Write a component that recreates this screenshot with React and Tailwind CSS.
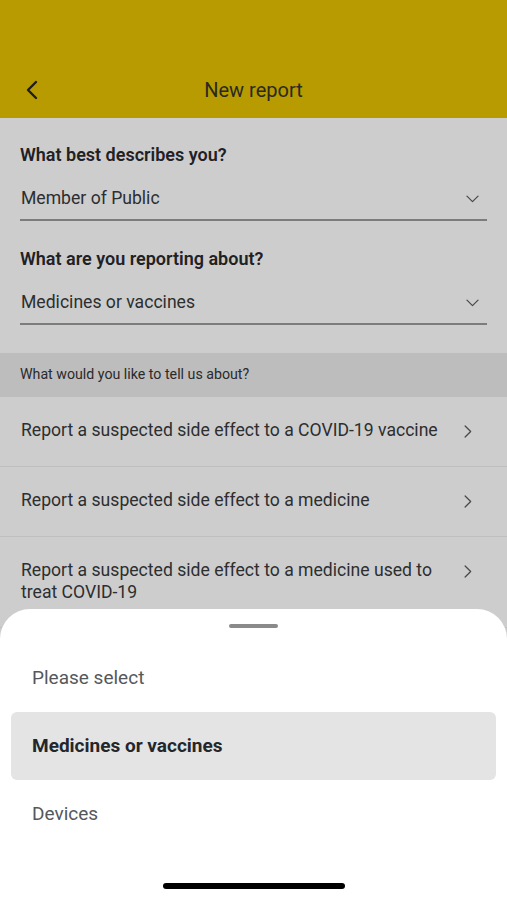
import React from "react";

const Chevron = ({ dir = "down", className = "" }) => (
  <svg
    className={className}
    fill="none"
    stroke="currentColor"
    strokeWidth="1.6"
    strokeLinecap="round"
    strokeLinejoin="round"
    viewBox="0 0 24 24"
  >
    {dir === "down" && <path d="M5 9l7 7 7-7" />}
    {dir === "right" && <path d="M9 5l7 7-7 7" />}
    {dir === "left" && <path d="M15 4l-8 8 8 8" />}
  </svg>
);

const SelectField = ({ label, value }) => (
  <div>
    <div className="text-[18px] leading-6 font-semibold text-[#1f2124]">{label}</div>
    <div className="mt-[19px] flex items-center justify-between pl-px pb-[9px] border-b-2 border-[#7c7c7c]">
      <span className="text-[17.6px] leading-6 text-[#2c2e30]">{value}</span>
      <Chevron className="w-[19px] h-[19px] mr-[5px] text-[#4a4a4a]" />
    </div>
  </div>
);

const options = [
  "Report a suspected side effect to a COVID-19 vaccine",
  "Report a suspected side effect to a medicine",
  "Report a suspected side effect to a medicine used to treat COVID-19",
];

const App = () => {
  return (
    <div
      className="relative w-full h-[900px] overflow-hidden bg-[#cdcdcd]"
      style={{ fontFamily: "Roboto, 'Liberation Sans', sans-serif" }}
    >
      {/* Header */}
      <header className="h-[118px] bg-[#b89b00] flex items-end pb-[16px] px-5">
        <div className="relative w-full h-6 flex items-center justify-center">
          <Chevron dir="left" className="absolute left-[1px] w-[24px] h-[24px] text-[#1e1e1e] [stroke-width:2.4]" />
          <span className="text-[20px] text-[#2a2a22]">New report</span>
        </div>
      </header>

      {/* Form */}
      <div className="px-5 pt-[25px] flex flex-col gap-[26px]">
        <SelectField label="What best describes you?" value="Member of Public" />
        <SelectField label="What are you reporting about?" value="Medicines or vaccines" />
      </div>

      <div className="mt-[28px] h-[44px] bg-[#bdbdbd] flex items-center px-5">
        <span className="text-[14.2px] text-[#2a2a2a]">What would you like to tell us about?</span>
      </div>

      <ul>
        {options.map((o, i) => (
          <li
            key={i}
            className="flex items-start justify-between pl-[21px] pr-[30px] pt-[22px] pb-[24px] border-b border-[#bfbfbf] min-h-[70px]"
          >
            <span className="text-[17.6px] leading-[22px] text-[#2c2e30] pr-[12px]">{o}</span>
            <Chevron dir="right" className="shrink-0 w-[19px] h-[19px] mt-[3px] text-[#4a4a4a]" />
          </li>
        ))}
      </ul>

      {/* Bottom sheet */}
      <div className="absolute left-0 right-0 bottom-0 h-[291px] bg-white rounded-t-[30px]">
        <div className="flex justify-center pt-[15px]">
          <div className="w-[49px] h-[4px] rounded-full bg-[#8a8a8a]" />
        </div>
        <div className="mt-[16px] px-[11px]">
          <div className="h-[68px] flex items-center pl-[21px] text-[19px] text-[#55585b]">Please select</div>
          <div className="h-[68px] flex items-center pl-[21px] rounded-[6px] bg-[#e4e4e5] text-[19px] font-bold text-[#23272b]">
            Medicines or vaccines
          </div>
          <div className="h-[68px] flex items-center pl-[21px] text-[19px] text-[#55585b]">Devices</div>
        </div>
        <div className="absolute left-1/2 -translate-x-1/2 bottom-[11px] w-[182px] h-[6px] rounded-full bg-black" />
      </div>
    </div>
  );
};

export default App;
